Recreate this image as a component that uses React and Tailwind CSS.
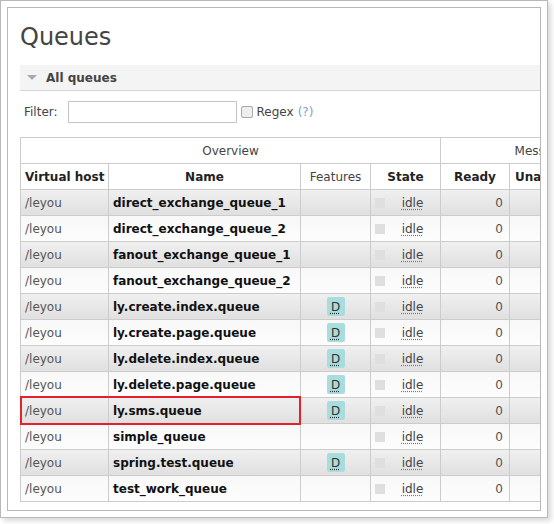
import React from "react";

const rows = [
  { name: "direct_exchange_queue_1", d: false },
  { name: "direct_exchange_queue_2", d: false },
  { name: "fanout_exchange_queue_1", d: false },
  { name: "fanout_exchange_queue_2", d: false },
  { name: "ly.create.index.queue", d: true },
  { name: "ly.create.page.queue", d: true },
  { name: "ly.delete.index.queue", d: true },
  { name: "ly.delete.page.queue", d: true },
  { name: "ly.sms.queue", d: true },
  { name: "simple_queue", d: false },
  { name: "spring.test.queue", d: true },
  { name: "test_work_queue", d: false },
];

export default function App() {
  return (
    <div
      className="w-[554px] h-[524px] bg-white"
      style={{ fontFamily: "'DejaVu Sans', Verdana, sans-serif" }}
    >
      <div className="w-[548px] h-[518px] border border-[#b8b8b8] bg-white p-[6px] shadow-[3px_3px_5px_rgba(0,0,0,0.15)]">
        <div className="h-full border border-[#b8b8b8] overflow-hidden pl-[12px]">
          <h1 className="mt-[15px] h-[28px] leading-[28px] text-[24px] font-normal text-[#444]">
            Queues
          </h1>

          <div className="mt-[14px] h-[26px] flex items-center bg-[#f4f4f4] border-b border-[#d6d6d6]">
            <span className="ml-[7px] w-0 h-0 border-l-[5px] border-r-[5px] border-t-[5px] border-l-transparent border-r-transparent border-t-[#aaa]"></span>
            <span className="ml-[9px] text-[12px] font-bold text-[#444]">All queues</span>
          </div>

          <div className="mt-[10px] h-[22px] flex items-center text-[12px] text-[#444]">
            <span className="ml-[4px]">Filter:</span>
            <span className="ml-[10px] w-[169px] h-[22px] border border-[#c4c4c4] bg-white"></span>
            <span className="ml-[4px] w-[12px] h-[12px] rounded-[2px] border border-[#a8a8a8] bg-[#eee]"></span>
            <span className="ml-[4px]">Regex</span>
            <span className="ml-[4px] text-[#7f9fcf]">(?)</span>
          </div>

          <div className="relative mt-[14px] w-max border-l border-t border-[#ccc] text-[12px]">
            <div className="flex h-[26px] bg-white text-[#444]">
              <div className="w-[420px] border-r border-b border-[#ccc] flex items-center justify-center">
                Overview
              </div>
              <div className="w-[207px] border-r border-b border-[#ccc] flex items-center justify-center">
                Messages
              </div>
            </div>
            <div className="flex h-[26px] border-b border-[#ccc] bg-white text-[#222]">
              <div className="w-[88px] border-r border-[#ccc] flex items-center pl-[4px] font-bold">
                Virtual host
              </div>
              <div className="w-[192px] border-r border-[#ccc] flex items-center justify-center font-bold">
                Name
              </div>
              <div className="w-[70px] border-r border-[#ccc] flex items-center justify-center text-[#444]">
                Features
              </div>
              <div className="w-[70px] border-r border-[#ccc] flex items-center justify-center font-bold">
                State
              </div>
              <div className="w-[69px] border-r border-[#ccc] flex items-center justify-center font-bold">
                Ready
              </div>
              <div className="w-[69px] border-r border-[#ccc] flex items-center justify-center font-bold">
                Unacked
              </div>
              <div className="w-[69px] border-r border-[#ccc] flex items-center justify-center font-bold">
                Total
              </div>
            </div>
            {rows.map((r, i) => (
              <div
                key={r.name}
                className={
                  "flex h-[26px] border-b border-[#ccc] " +
                  (i % 2 === 0
                    ? "bg-gradient-to-b from-[#f0f0f0] to-[#e0e0e0]"
                    : "bg-gradient-to-b from-[#f8f8f8] to-[#fdfdfd]")
                }
              >
                <div className="w-[88px] border-r border-[#ccc] flex items-center pl-[4px] text-[#555]">
                  /leyou
                </div>
                <div className="w-[192px] border-r border-[#ccc] flex items-center pl-[4px] font-bold text-[#111]">
                  {r.name}
                </div>
                <div className="w-[70px] border-r border-[#ccc] flex items-center justify-center">
                  {r.d && (
                    <span className="w-[18px] h-[19px] rounded-[2px] bg-[#a9dddd] flex items-center justify-center text-[#333] underline decoration-dotted underline-offset-2">
                      D
                    </span>
                  )}
                </div>
                <div className="w-[70px] border-r border-[#ccc] flex items-center">
                  <span className="ml-[4px] w-[10px] h-[10px] bg-[#dfdfdf]"></span>
                  <span className="flex-1 text-center text-[#444] underline decoration-dotted decoration-[#777] underline-offset-2">
                    idle
                  </span>
                </div>
                <div className="w-[69px] border-r border-[#ccc] flex items-center justify-end pr-[6px] text-[#555]">
                  0
                </div>
                <div className="w-[69px] border-r border-[#ccc]"></div>
                <div className="w-[69px] border-r border-[#ccc]"></div>
              </div>
            ))}
            <div className="absolute -left-px top-[258px] w-[281px] h-[29px] border-2 border-[#e3202c]"></div>
          </div>
        </div>
      </div>
    </div>
  );
}
